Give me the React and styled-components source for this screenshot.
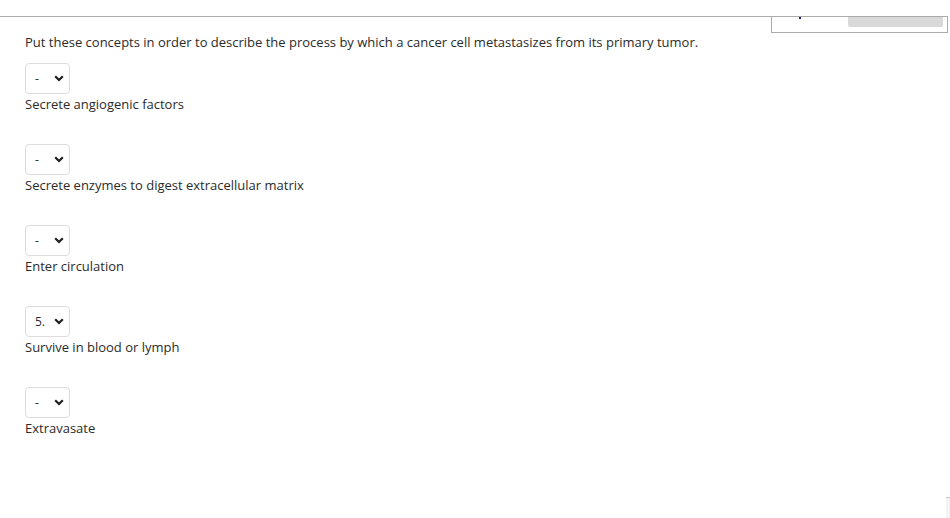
import React from 'react';
import styled, { createGlobalStyle } from 'styled-components';

const colors = {
  text: '#2b2b2b',
  rule: '#ababab',
  field: '#dcdcdc',
  widgetFill: '#d9d9d9',
  marker: '#1a1a6e',
};

const GlobalStyle = createGlobalStyle`
  body {
    margin: 0;
    background: #fff;
    font-family: "Open Sans", "Noto Sans", sans-serif;
    color: ${colors.text};
  }
`;

const Page = styled.div`
  width: 950px;
  height: 518px;
  overflow: hidden;
  position: relative;
`;

const TopBar = styled.div`
  height: 16px;
  border-bottom: 1px solid ${colors.rule};
  width: 948px;
`;

const WidgetRow = styled.div`
  display: flex;
  justify-content: flex-end;
  padding-right: 2px;
`;

const Widget = styled.div`
  box-sizing: border-box;
  width: 177px;
  height: 16px;
  border: 1px solid ${colors.rule};
  border-top: none;
  display: flex;
  align-items: flex-start;
  padding-right: 4px;
`;

const Marker = styled.span`
  width: 2px;
  height: 2px;
  background: ${colors.marker};
  margin-left: 27px;
`;

const WidgetFill = styled.span`
  width: 95px;
  height: 10px;
  background: ${colors.widgetFill};
  border-radius: 0 0 2px 2px;
  margin-left: auto;
`;

const Content = styled.div`
  padding: 0 25px;
`;

const Prompt = styled.p`
  margin: 0;
  font-size: 13px;
  line-height: 18px;
`;

const List = styled.div`
  display: flex;
  flex-direction: column;
  gap: 31px;
  margin-top: 12px;
`;

const Item = styled.div`
  display: flex;
  flex-direction: column;
  align-items: flex-start;
`;

const SelectBox = styled.div`
  position: relative;
  width: 45px;
  height: 31px;
`;

const Select = styled.select`
  appearance: none;
  width: 100%;
  height: 100%;
  box-sizing: border-box;
  border: 1px solid ${colors.field};
  border-radius: 4px;
  background: #fff;
  font-family: "Open Sans", "Noto Sans", sans-serif;
  font-size: 12px;
  color: ${colors.text};
  padding: 0 0 0 9px;
  margin: 0;
  outline: none;
`;

const Chevron = styled.svg`
  position: absolute;
  right: 6px;
  top: 12px;
  pointer-events: none;
`;

const Label = styled.div`
  font-size: 13px;
  line-height: 18px;
  padding-top: 1px;
`;

const ScrollNub = styled.div`
  position: absolute;
  right: 0;
  bottom: 0;
  width: 4px;
  height: 20px;
  background: #f3f3f3;
  border-top: 1px solid #c8c8c8;
`;

const steps = [
  { value: '-', label: 'Secrete angiogenic factors' },
  { value: '-', label: 'Secrete enzymes to digest extracellular matrix' },
  { value: '-', label: 'Enter circulation' },
  { value: '5.', label: 'Survive in blood or lymph' },
  { value: '-', label: 'Extravasate' },
];

const options = ['-', '1.', '2.', '3.', '4.', '5.'];

const App = () => {
  return (
    <Page>
      <GlobalStyle />
      <TopBar />
      <WidgetRow>
        <Widget>
          <Marker />
          <WidgetFill />
        </Widget>
      </WidgetRow>
      <Content>
        <Prompt>
          Put these concepts in order to describe the process by which a cancer cell metastasizes from its primary tumor.
        </Prompt>
        <List>
          {steps.map((step, index) => (
            <Item key={index}>
              <SelectBox>
                <Select defaultValue={step.value}>
                  {options.map((opt) => (
                    <option key={opt} value={opt}>{opt}</option>
                  ))}
                </Select>
                <Chevron width="10" height="7" viewBox="0 0 10 7">
                  <path d="M1.2 1.2 L5 5 L8.8 1.2" fill="none" stroke="#1e1e1e" strokeWidth="2.2" />
                </Chevron>
              </SelectBox>
              <Label>{step.label}</Label>
            </Item>
          ))}
        </List>
      </Content>
      <ScrollNub />
    </Page>
  );
};

export default App;
